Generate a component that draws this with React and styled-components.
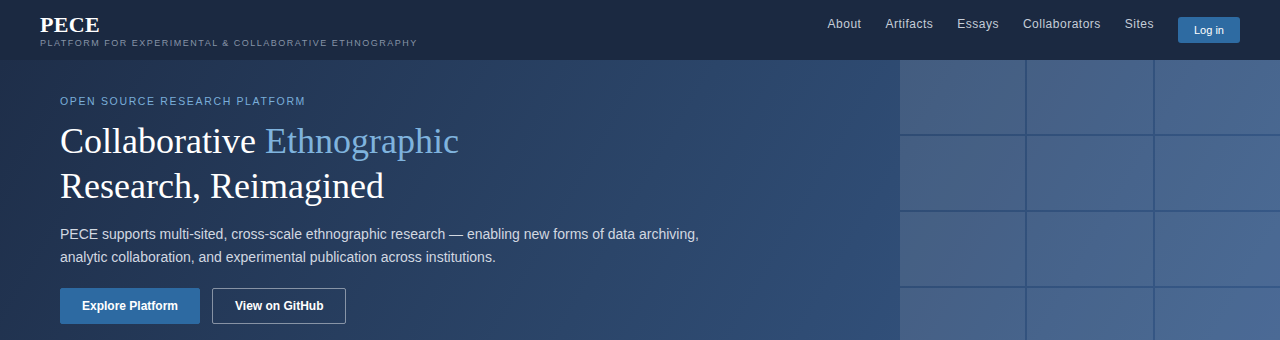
import styled, { createGlobalStyle } from "styled-components";

const GlobalStyle = createGlobalStyle`
  html, body {
    margin: 0;
    padding: 0;
    background: #1b2941;
  }
  * { box-sizing: border-box; }
`;

const navLinks = ["About", "Artifacts", "Essays", "Collaborators", "Sites"];

function App() {
  return (
    <Wrapper>
      <GlobalStyle />
      <Header>
        <Brand>
          <Logo>PECE</Logo>
          <Tagline>Platform for Experimental &amp; Collaborative Ethnography</Tagline>
        </Brand>
        <Nav>
          {navLinks.map((l) => (
            <NavLink key={l} href="#">{l}</NavLink>
          ))}
          <LoginButton>Log in</LoginButton>
        </Nav>
      </Header>
      <Hero>
        <HeroContent>
          <Eyebrow>Open Source Research Platform</Eyebrow>
          <Title>
            Collaborative <Accent>Ethnographic</Accent>
            <br />
            Research, Reimagined
          </Title>
          <Lead>
            PECE supports multi-sited, cross-scale ethnographic research — enabling new forms of data
            archiving, analytic collaboration, and experimental publication across institutions.
          </Lead>
          <Actions>
            <Button $primary>Explore Platform</Button>
            <Button>View on GitHub</Button>
          </Actions>
        </HeroContent>
        <Tiles>
          {Array.from({ length: 12 }).map((_, i) => (
            <Tile key={i} />
          ))}
        </Tiles>
      </Hero>
    </Wrapper>
  );
}

export default App;

export const Wrapper = styled.div`
  width: 100%;
  height: 340px;
  overflow: hidden;
  font-family: "Liberation Sans", Arial, sans-serif;
`;

export const Header = styled.header`
  height: 60px;
  background: #1b2941;
  display: flex;
  justify-content: space-between;
  align-items: flex-start;
  padding: 0 40px;
`;

export const Brand = styled.div`
  display: flex;
  flex-direction: column;
  padding-top: 13px;
`;

export const Logo = styled.div`
  font-family: "Liberation Serif", "Times New Roman", serif;
  font-weight: 700;
  font-size: 22px;
  line-height: 24px;
  letter-spacing: 0.3px;
  color: #ffffff;
`;

export const Tagline = styled.div`
  font-size: 9px;
  line-height: 11px;
  letter-spacing: 1.5px;
  text-transform: uppercase;
  color: #8693a6;
  margin-top: 1px;
`;

export const Nav = styled.nav`
  display: flex;
  align-items: flex-start;
  gap: 24px;
  padding-top: 17px;
`;

export const NavLink = styled.a`
  font-size: 12px;
  line-height: 14px;
  letter-spacing: 0.5px;
  color: #c5cdd8;
  text-decoration: none;
`;

export const LoginButton = styled.button`
  height: 26px;
  width: 62px;
  border: none;
  border-radius: 3px;
  background: #2e6ba2;
  color: #ffffff;
  font-family: "Liberation Sans", Arial, sans-serif;
  font-size: 11px;
`;

export const Hero = styled.section`
  height: 280px;
  display: flex;
  justify-content: space-between;
  background: linear-gradient(120deg, #1e2e49 0%, #2b4569 50%, #375a8a 100%);
`;

export const HeroContent = styled.div`
  padding: 35px 0 0 60px;
`;

export const Eyebrow = styled.div`
  font-size: 10.5px;
  line-height: 12px;
  letter-spacing: 1.65px;
  text-transform: uppercase;
  color: #7aaed9;
`;

export const Title = styled.h1`
  margin: 12px 0 0;
  font-family: "Liberation Serif", "Times New Roman", serif;
  font-weight: 400;
  font-size: 36px;
  line-height: 45px;
  color: #ffffff;
`;

export const Accent = styled.span`
  color: #7fb3dd;
`;

export const Lead = styled.p`
  margin: 14px 0 0;
  max-width: 680px;
  font-size: 14px;
  line-height: 23px;
  color: #d2d8e1;
`;

export const Actions = styled.div`
  display: flex;
  gap: 12px;
  margin-top: 19px;
`;

export const Button = styled.button`
  height: 36px;
  padding: 0 ${(p) => (p.$primary ? "21px" : "22px")};
  border-radius: 2px;
  font-family: "Liberation Sans", Arial, sans-serif;
  font-size: 12px;
  font-weight: 700;
  color: #ffffff;
  background: ${(p) => (p.$primary ? "#2d6aa2" : "transparent")};
  border: 1px solid ${(p) => (p.$primary ? "#2d6aa2" : "rgba(255,255,255,0.45)")};
`;

export const Tiles = styled.div`
  width: 380px;
  flex-shrink: 0;
  display: grid;
  grid-template-columns: repeat(3, 1fr);
  grid-auto-rows: 74px;
  gap: 2px;
`;

export const Tile = styled.div`
  background: rgba(255, 255, 255, 0.1);
`;
